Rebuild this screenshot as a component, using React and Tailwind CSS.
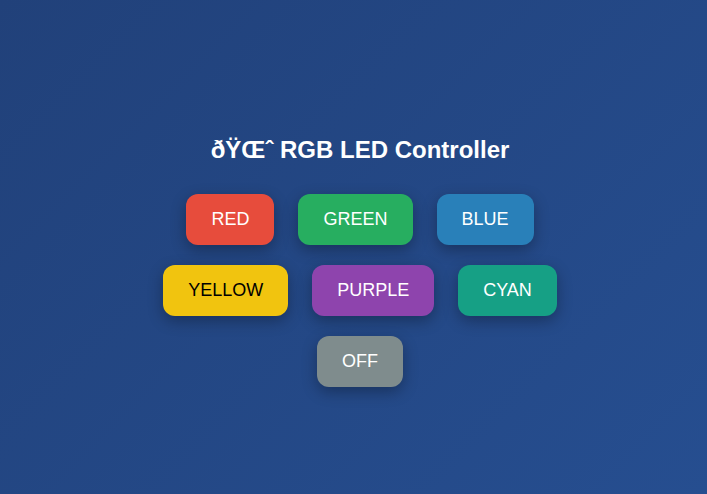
const colors = [
  { name: 'RED', style: 'bg-[#e74c3c] text-white' },
  { name: 'GREEN', style: 'bg-[#27ae60] text-white' },
  { name: 'BLUE', style: 'bg-[#2980b9] text-white' },
  { name: 'YELLOW', style: 'bg-[#f1c40f] text-black' },
  { name: 'PURPLE', style: 'bg-[#8e44ad] text-white' },
  { name: 'CYAN', style: 'bg-[#16a085] text-white' },
  { name: 'OFF', style: 'bg-[#7f8c8d] text-white' },
];

export default function App() {
  return (
    <main className="flex min-h-screen flex-col items-center justify-center bg-linear-135 from-[#21417a] to-[#264e90] pt-7 pl-[13px] font-['Liberation_Sans',Arial,sans-serif]">
      <h1 className="mb-[30px] text-center text-2xl leading-7 font-bold text-white">
        ðŸŒˆ RGB LED Controller
      </h1>
      <div className="flex max-w-[420px] flex-wrap justify-center gap-x-6 gap-y-5">
        {colors.map(({ name, style }) => (
          <button
            key={name}
            type="button"
            className={`cursor-pointer rounded-xl px-[25px] py-[15px] text-lg leading-[21px] shadow-[0_5px_15px_rgba(0,0,0,0.3)] ${style}`}
          >
            {name}
          </button>
        ))}
      </div>
    </main>
  );
}
